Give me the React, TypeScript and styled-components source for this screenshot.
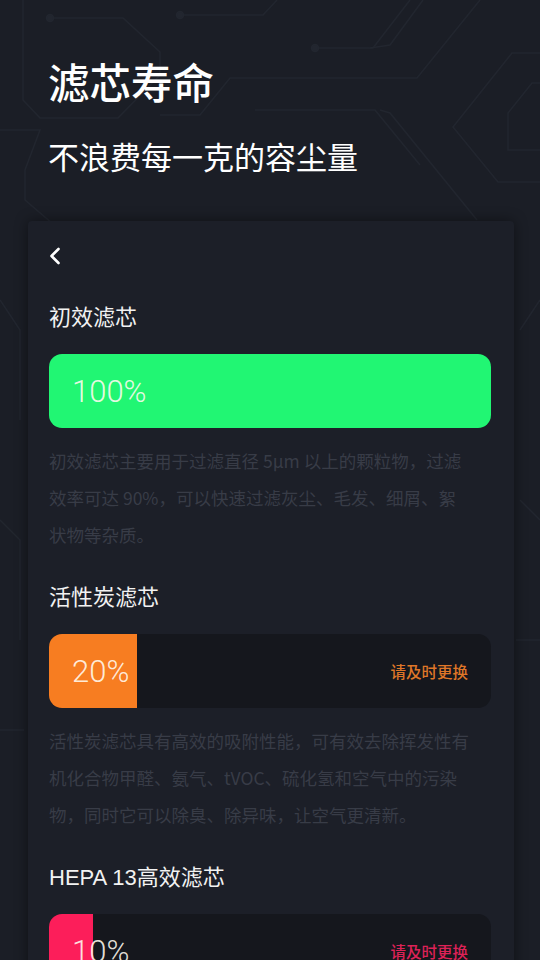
import React from "react";
import styled, { createGlobalStyle } from "styled-components";

const Global = createGlobalStyle`
  html, body { margin: 0; padding: 0; background: #1b1e26; }
  body { font-family: "Liberation Sans", "Noto Sans CJK SC", sans-serif; -webkit-font-smoothing: antialiased; }
  * { box-sizing: border-box; }
`;

const Page = styled.div`
  position: relative;
  width: 540px;
  height: 960px;
  overflow: hidden;
  background: #1b1e26;
`;

const Circuit = styled.svg`
  position: absolute;
  inset: 0;
  pointer-events: none;
`;

const Content = styled.div`
  position: relative;
  display: flex;
  flex-direction: column;
  padding-top: 56px;
`;

const Header = styled.header`
  display: flex;
  flex-direction: column;
  gap: 30px;
  padding-left: 48px;
`;

const Title = styled.h1`
  margin: 0;
  font-family: "Noto Sans CJK SC", sans-serif;
  font-size: 41.5px;
  line-height: 50px;
  font-weight: 500;
  color: #ffffff;
`;

const Subtitle = styled.h2`
  margin: 0;
  font-family: "Noto Sans CJK SC", sans-serif;
  font-size: 31px;
  line-height: 40px;
  font-weight: 400;
  color: #ffffff;
`;

const Card = styled.section`
  margin: 45px 26px 0 28px;
  padding: 20px 23px 40px 21px;
  background: #1c1f28;
  border-radius: 4px 4px 0 0;
  box-shadow: 0 0 14px rgba(0, 0, 0, 0.45);
  display: flex;
  flex-direction: column;
`;

const BackRow = styled.div`
  height: 30px;
  display: flex;
  align-items: center;
  margin-bottom: 32px;
`;

const Section = styled.div`
  display: flex;
  flex-direction: column;
  & + & { margin-top: 30px; }
`;

const SectionTitle = styled.h3`
  margin: 0 0 21px;
  font-family: "Liberation Sans", "Noto Sans CJK SC", sans-serif;
  font-size: 22px;
  line-height: 30px;
  font-weight: 400;
  color: #f2f2f2;
`;

const Track = styled.div`
  position: relative;
  height: 74px;
  border-radius: 13px;
  background: #15171d;
  overflow: hidden;
  display: flex;
  align-items: center;
  justify-content: space-between;
  padding: 0 23px;
`;

const Fill = styled.div<{ $color: string }>`
  position: absolute;
  left: 0;
  top: 0;
  bottom: 0;
  background: ${(p) => p.$color};
`;

const Percent = styled.span`
  position: relative;
  font-family: Roboto, "Liberation Sans", sans-serif;
  font-weight: 300;
  font-size: 31px;
  color: rgba(255, 250, 240, 0.9);
`;

const Warn = styled.span<{ $color: string }>`
  position: relative;
  font-family: "Noto Sans CJK SC", sans-serif;
  font-size: 15.5px;
  font-weight: 500;
  color: ${(p) => p.$color};
`;

const Desc = styled.p`
  margin: 14px 0 0;
  padding-right: 18px;
  font-family: "Noto Sans CJK SC", sans-serif;
  font-size: 17.5px;
  line-height: 37px;
  color: #383c47;
`;

type Filter = {
  name: string;
  pct: number;
  color: string;
  warn?: string;
  desc: string;
};

const filters: Filter[] = [
  {
    name: "初效滤芯",
    pct: 100,
    color: "#21f673",
    desc: "初效滤芯主要用于过滤直径 5μm 以上的颗粒物，过滤效率可达 90%，可以快速过滤灰尘、毛发、细屑、絮状物等杂质。",
  },
  {
    name: "活性炭滤芯",
    pct: 20,
    color: "#f77d21",
    warn: "#df7628",
    desc: "活性炭滤芯具有高效的吸附性能，可有效去除挥发性有机化合物甲醛、氨气、tVOC、硫化氢和空气中的污染物，同时它可以除臭、除异味，让空气更清新。",
  },
  {
    name: "HEPA 13高效滤芯",
    pct: 10,
    color: "#fc1e5a",
    warn: "#dd2257",
    desc: "HEPA 13 高效滤芯可过滤 0.3μm 的微小颗粒物，过滤效率高达 99.97%。",
  },
];

const BackIcon = () => (
  <svg width="12" height="18" viewBox="0 0 12 18" fill="none">
    <polyline points="9.5,2 2.5,9 9.5,16" stroke="#ffffff" strokeWidth="2.6" strokeLinecap="round" strokeLinejoin="round" />
  </svg>
);

const CircuitBg = () => (
  <Circuit width="540" height="960" viewBox="0 0 540 960" fill="none">
    <g stroke="#22262f" strokeWidth="1.5">
      <polyline points="50,18 123,18 160,52 160,75 118,118 40,118 23,100 23,0" />
      <circle cx="50" cy="18" r="3.5" fill="#22262f" />
      <polyline points="180,15 263,15 277,0" />
      <circle cx="180" cy="15" r="3.5" fill="#22262f" />
      <polyline points="315,48 373,48 410,0" />
      <circle cx="315" cy="48" r="3.5" fill="#22262f" />
      <polyline points="480,0 417,78 230,78 200,115 160,115" />
      <polyline points="423,0 390,45 370,48" />
      <polyline points="540,53 512,53 453,127 498,182 540,182" />
      <polyline points="540,83 532,83 508,113 508,150 540,150" />
      <polyline points="380,110 390,113 477,220" />
      <polyline points="0,130 40,130 25,170 25,200 60,230" />
      <polyline points="255,110 375,110 420,165" />
      <polyline points="0,300 20,330 20,420" />
      <polyline points="0,520 20,540 20,640" />
      <polyline points="520,330 540,300" />
      <polyline points="520,500 540,520" />
      <polyline points="0,730 24,730" />
      <polyline points="516,640 540,640" />
    </g>
  </Circuit>
);

export default function App() {
  return (
    <Page>
      <Global />
      <CircuitBg />
      <Content>
        <Header>
          <Title>滤芯寿命</Title>
          <Subtitle>不浪费每一克的容尘量</Subtitle>
        </Header>
        <Card>
          <BackRow>
            <BackIcon />
          </BackRow>
          {filters.map((f) => (
            <Section key={f.name}>
              <SectionTitle>{f.name}</SectionTitle>
              <Track>
                <Fill $color={f.color} style={{ width: `${f.pct}%` }} />
                <Percent>{f.pct}%</Percent>
                {f.warn && <Warn $color={f.warn}>请及时更换</Warn>}
              </Track>
              <Desc>{f.desc}</Desc>
            </Section>
          ))}
        </Card>
      </Content>
    </Page>
  );
}
